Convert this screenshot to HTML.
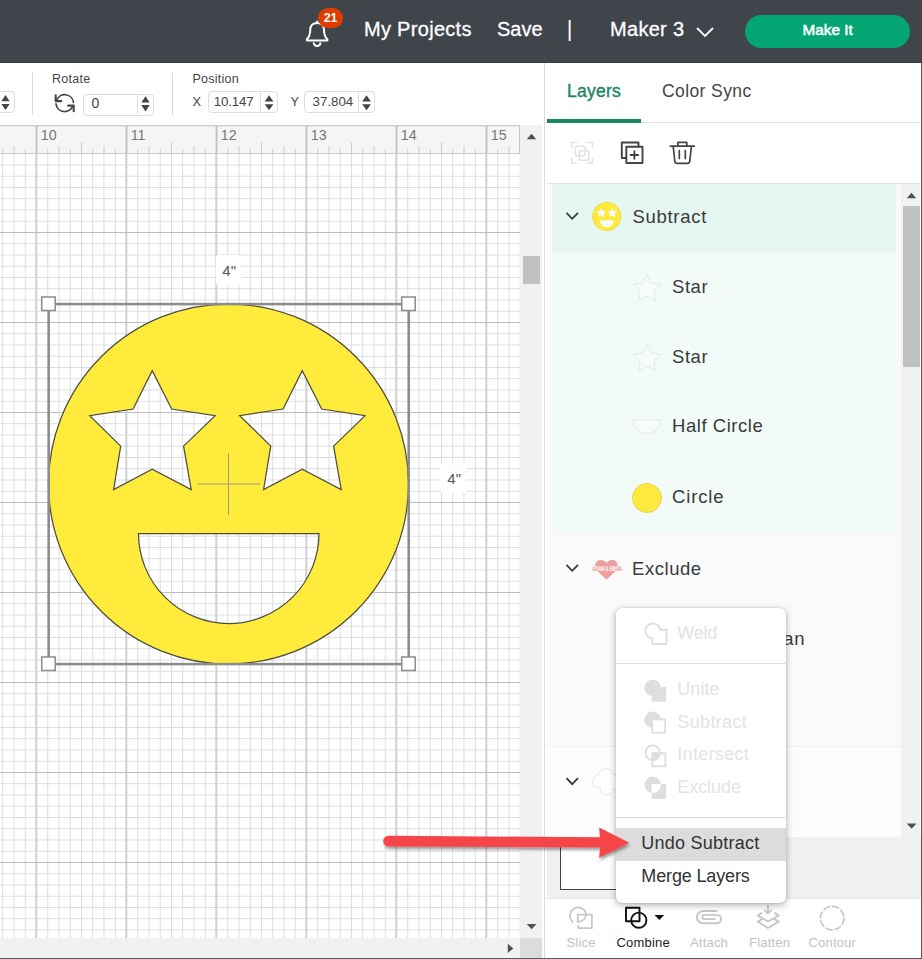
<!DOCTYPE html>
<html>
<head>
<meta charset="utf-8">
<title>Design Space - Combine</title>
<style>
*{box-sizing:border-box;margin:0;padding:0}
html,body{width:922px;height:959px;overflow:hidden;background:#fff}
body{position:relative;font-family:"Liberation Sans",sans-serif;color:#333}
.abs{position:absolute}
.t{position:absolute;white-space:nowrap;line-height:1}
/* top bar */
#topbar{left:0;top:0;width:922px;height:62.500px;background:#40444b;border-bottom:1px solid #353940}
.nav{color:#fff;font-size:20px;-webkit-text-stroke:0.300px #fff}
#makeit{left:745px;top:15px;width:165px;height:33px;border-radius:17px;background:#03a673}
/* toolbar */
.lab{font-size:12.5px;color:#444}
.inp{border:1px solid #dcdcdc;border-radius:4px;background:#fff;height:22px}
.val{font-size:13.300px;color:#444}
.sep{width:1px;background:#d8d8d8;top:73px;height:42px}
/* panel */
.lname{font-size:18.5px;color:#3a3a3a}
.mi{font-size:18px;color:#e3e3e3}
.mi2{font-size:18px;color:#333}
.bl{font-size:13px;color:#c2c2c2}
</style>
</head>
<body>

<!-- ===== TOP BAR ===== -->
<div id="topbar" class="abs"></div>
<svg class="abs" style="left:300px;top:0px" width="50" height="60" viewBox="300 0 50 60">
  <path d="M306.900 40.600 L306.900 39.300 C309.600 36.500 310.200 34 310.200 30 C310.200 25.500 313 22.900 317.100 22.900 C321.200 22.900 324 25.500 324 30 C324 34 324.600 36.500 327.400 39.300 L327.400 40.600 Z M317.100 20.800 V22.500" fill="none" stroke="#fff" stroke-width="2" stroke-linejoin="round"/>
  <path d="M313.700 42.600 A3.400 3.400 0 0 0 320.500 42.600" fill="none" stroke="#fff" stroke-width="2"/>
  <rect x="318" y="8" width="25.200" height="20.200" rx="10.100" fill="#e03c00"/>
  <text x="330.400" y="21.900" font-size="12.300" font-weight="bold" fill="#fff" text-anchor="middle" font-family="Liberation Sans, sans-serif" letter-spacing="-0.3">21</text>
</svg>
<div id="nav1" class="t nav" style="left:364px;top:19.400px;letter-spacing:0.3px">My Projects</div>
<div id="nav2" class="t nav" style="left:497px;top:19.400px;letter-spacing:0px">Save</div>
<div id="nav3" class="t nav" style="left:566.800px;top:17.500px;font-size:22px;-webkit-text-stroke:0">|</div>
<div id="nav4" class="t nav" style="left:610px;top:19.400px;letter-spacing:0.3px">Maker 3</div>
<svg class="abs" style="left:694px;top:24px" width="22" height="16" viewBox="0 0 22 16"><path d="M3 4 L11 12 L19 4" fill="none" stroke="#fff" stroke-width="1.8"/></svg>
<div id="makeit" class="abs"></div>
<div id="mk" class="t" style="left:802.500px;top:21.500px;font-size:15.300px;color:#fff;-webkit-text-stroke:0.550px #fff">Make It</div>

<!-- ===== EDIT TOOLBAR ===== -->
<div class="abs inp" style="left:-20px;top:91.300px;width:34.600px;border-radius:4px"></div>
<div class="abs sep" style="left:32px"></div>
<div class="abs sep" style="left:172px"></div>
<div id="lrot" class="t lab" style="left:52px;top:73px;letter-spacing:0.250px">Rotate</div>
<div id="lpos" class="t lab" style="left:192.500px;top:73px;letter-spacing:0.250px">Position</div>
<svg class="abs" style="left:50px;top:90px" width="30" height="26" viewBox="50 90 30 26" fill="none" stroke="#444" stroke-width="1.700" stroke-linecap="round" stroke-linejoin="round">
  <path d="M56.600 100.400 A8.700 8.700 0 0 1 73.400 102.400"/><path d="M55.700 95.400 V101.100 H61.300" stroke-width="2.100"/>
  <path d="M72.800 105.900 A8.700 8.700 0 0 1 56 103.800"/><path d="M73.700 111.300 V105.600 H68.100" stroke-width="2.100"/>
</svg>
<div class="abs inp" style="left:83.400px;top:93.500px;width:71px"></div>
<div class="abs" style="left:137px;top:94.500px;width:1px;height:19px;background:#ddd"></div>
<div id="v0" class="t val" style="left:91.500px;top:95.500px;font-size:14px">0</div>
<div id="lx" class="t lab" style="left:192.500px;top:96px;font-size:12.800px">X</div>
<div class="abs inp" style="left:207.500px;top:91.200px;width:70.500px"></div>
<div class="abs" style="left:260px;top:92.200px;width:1px;height:20px;background:#ddd"></div>
<div id="vx" class="t val" style="left:213.700px;top:95px;letter-spacing:-0.150px">10.147</div>
<div id="ly" class="t lab" style="left:290.500px;top:96px;font-size:12.800px">Y</div>
<div class="abs inp" style="left:304.300px;top:91.200px;width:70.500px"></div>
<div class="abs" style="left:358px;top:92.200px;width:1px;height:20px;background:#ddd"></div>
<div id="vy" class="t val" style="left:312.600px;top:95px">37.804</div>
<svg class="abs" style="left:0;top:88px" width="400" height="30" viewBox="0 88 400 30">
  <g fill="#444">
    <path d="M1.400 101.200 l4.100 -6.200 l4.100 6.200z M1.400 104 l4.100 6.100 l4.100 -6.100z"/>
    <path d="M141.300 102.600 l4.200 -6.300 l4.200 6.300z M141.300 105 l4.200 6.400 l4.200 -6.400z"/>
    <path d="M264.700 101.400 l4.350 -6.100 l4.350 6.100z M264.700 104.200 l4.350 6 l4.350 -6z"/>
    <path d="M362.200 101.400 l4.350 -6.100 l4.350 6.100z M362.200 104.200 l4.350 6 l4.350 -6z"/>
  </g>
</svg>

<!-- ===== CANVAS AREA ===== -->
<svg id="canvas" class="abs" style="left:0;top:125px" width="520" height="813" viewBox="0 125 520 813">
  <defs>
    <pattern id="gmin" x="2.25" y="7" width="11.25" height="11.25" patternUnits="userSpaceOnUse">
      <path d="M0.5 0 V11.25 M0 0.5 H11.25" stroke="#dcdcdc" stroke-width="1" fill="none"/>
    </pattern>
    <pattern id="gmaj" x="35.300" y="232" width="90" height="90" patternUnits="userSpaceOnUse">
      <path d="M1 0 V90" stroke="#d0d0d0" stroke-width="2" fill="none"/><path d="M0 0.500 H90" stroke="#bdbdbd" stroke-width="1.200" fill="none"/>
    </pattern>
  </defs>
  <rect x="0" y="125" width="520" height="813" fill="#fff"/>
  <rect x="0" y="153" width="520" height="785" fill="url(#gmin)"/>
  <rect x="0" y="153" width="520" height="785" fill="url(#gmaj)"/>
  <!-- ruler -->
  <rect x="0" y="125" width="520" height="28.500" fill="#f5f5f5"/>
  <rect x="0" y="124.800" width="520" height="1.600" fill="#cdcdcd"/>
  <rect x="0" y="153" width="520" height="1" fill="#d0d0d0"/>
  <rect x="519" y="125" width="1" height="29" fill="#c8c8c8"/>
  <g id="ticks" stroke="#cacaca" stroke-width="1"><line x1="2.75" y1="149" x2="2.75" y2="153.500"/><line x1="14.00" y1="146" x2="14.00" y2="153.500"/><line x1="25.25" y1="149" x2="25.25" y2="153.500"/><line x1="47.75" y1="149" x2="47.75" y2="153.500"/><line x1="59.00" y1="146" x2="59.00" y2="153.500"/><line x1="70.25" y1="149" x2="70.25" y2="153.500"/><line x1="81.50" y1="142.6" x2="81.50" y2="153.500"/><line x1="92.75" y1="149" x2="92.75" y2="153.500"/><line x1="104.00" y1="146" x2="104.00" y2="153.500"/><line x1="115.25" y1="149" x2="115.25" y2="153.500"/><line x1="137.75" y1="149" x2="137.75" y2="153.500"/><line x1="149.00" y1="146" x2="149.00" y2="153.500"/><line x1="160.25" y1="149" x2="160.25" y2="153.500"/><line x1="171.50" y1="142.6" x2="171.50" y2="153.500"/><line x1="182.75" y1="149" x2="182.75" y2="153.500"/><line x1="194.00" y1="146" x2="194.00" y2="153.500"/><line x1="205.25" y1="149" x2="205.25" y2="153.500"/><line x1="227.75" y1="149" x2="227.75" y2="153.500"/><line x1="239.00" y1="146" x2="239.00" y2="153.500"/><line x1="250.25" y1="149" x2="250.25" y2="153.500"/><line x1="261.50" y1="142.6" x2="261.50" y2="153.500"/><line x1="272.75" y1="149" x2="272.75" y2="153.500"/><line x1="284.00" y1="146" x2="284.00" y2="153.500"/><line x1="295.25" y1="149" x2="295.25" y2="153.500"/><line x1="317.75" y1="149" x2="317.75" y2="153.500"/><line x1="329.00" y1="146" x2="329.00" y2="153.500"/><line x1="340.25" y1="149" x2="340.25" y2="153.500"/><line x1="351.50" y1="142.6" x2="351.50" y2="153.500"/><line x1="362.75" y1="149" x2="362.75" y2="153.500"/><line x1="374.00" y1="146" x2="374.00" y2="153.500"/><line x1="385.25" y1="149" x2="385.25" y2="153.500"/><line x1="407.75" y1="149" x2="407.75" y2="153.500"/><line x1="419.00" y1="146" x2="419.00" y2="153.500"/><line x1="430.25" y1="149" x2="430.25" y2="153.500"/><line x1="441.50" y1="142.6" x2="441.50" y2="153.500"/><line x1="452.75" y1="149" x2="452.75" y2="153.500"/><line x1="464.00" y1="146" x2="464.00" y2="153.500"/><line x1="475.25" y1="149" x2="475.25" y2="153.500"/><line x1="497.75" y1="149" x2="497.75" y2="153.500"/><line x1="509.00" y1="146" x2="509.00" y2="153.500"/><line x1="520.25" y1="149" x2="520.25" y2="153.500"/><line x1="36.5" y1="126" x2="36.5" y2="153.500" stroke="#c2c2c2" stroke-width="1.900"/><line x1="126.5" y1="126" x2="126.5" y2="153.500" stroke="#c2c2c2" stroke-width="1.900"/><line x1="216.5" y1="126" x2="216.5" y2="153.500" stroke="#c2c2c2" stroke-width="1.900"/><line x1="306.5" y1="126" x2="306.5" y2="153.500" stroke="#c2c2c2" stroke-width="1.900"/><line x1="396.5" y1="126" x2="396.5" y2="153.500" stroke="#c2c2c2" stroke-width="1.900"/><line x1="486.5" y1="126" x2="486.5" y2="153.500" stroke="#c2c2c2" stroke-width="1.900"/></g>
  <g font-family="Liberation Sans, sans-serif" font-size="14.300" fill="#777">
    <text x="40.700" y="140.300">10</text><text x="130.700" y="140.300">11</text><text x="220.700" y="140.300">12</text>
    <text x="310.700" y="140.300">13</text><text x="400.700" y="140.300">14</text><text x="490.700" y="140.300">15</text>
  </g>
</svg>

<!-- shape -->
<svg id="shape" class="abs" style="left:0;top:240px" width="520" height="460" viewBox="0 240 520 460">
  <path id="face" fill="#ffeb3b" stroke="#4e4e42" stroke-width="1.250" fill-rule="evenodd" d="
    M48.500 484 a180 180 0 1 0 360 0 a180 180 0 1 0 -360 0 z
    M152.200 370.600 L171.700 409 L215.100 415.700 L183.600 446.100 L191.200 489.500 L152.200 469.300 L113.600 489.500 L120.700 446.100 L89.700 415.700 L133.100 409 z
    M302.200 370.600 L321.700 409 L365.100 415.700 L333.600 446.100 L341.200 489.500 L302.200 469.300 L263.600 489.500 L270.700 446.100 L239.700 415.700 L283.100 409 z
    M138.500 533.500 H319 A90.250 90 0 0 1 138.500 533.500 z"/>
  <path d="M197.500 484 H260 M228.500 453.500 V515" stroke="#9a9a8a" stroke-width="1" fill="none"/>
  <!-- selection -->
  <rect x="48.700" y="304.100" width="360.100" height="360" fill="none" stroke="#8c8c8c" stroke-width="2.500"/>
  <g fill="#fff" stroke="#8a8a8a" stroke-width="1.500">
    <rect x="41.700" y="297" width="13.500" height="13.500"/><rect x="401.700" y="297" width="13.500" height="13.500"/>
    <rect x="41.700" y="657" width="13.500" height="13.500"/><rect x="401.700" y="657" width="13.500" height="13.500"/>
  </g>
  <rect x="215.800" y="255" width="25.500" height="30" rx="2" fill="#fff"/>
  <rect x="440.700" y="463" width="25.500" height="30" rx="2" fill="#fff"/>
  <g font-family="Liberation Sans, sans-serif" font-size="15" fill="#555">
    <text x="229.200" y="276" text-anchor="middle">4"</text><text x="454.200" y="483.800" text-anchor="middle">4"</text>
  </g>
</svg>

<!-- scrollbars -->
<div class="abs" style="left:520px;top:125px;width:22px;height:813px;background:#f1f1f1"></div>
<div class="abs" style="left:523px;top:256px;width:17px;height:28px;background:#c1c1c1"></div>
<div class="abs" style="left:0;top:938px;width:520px;height:20px;background:#f1f1f1"></div>
<div class="abs" style="left:520px;top:938px;width:22px;height:20px;background:#dcdcdc"></div>
<svg class="abs" style="left:500px;top:125px" width="44" height="834" viewBox="500 125 44 834" fill="#505050">
  <path d="M526.800 139.200 L531.500 133.700 L536.200 139.200 z"/>
  <path d="M526.700 924 L536.500 924 L531.600 929.200 z"/>
  <path d="M507.800 943.800 L513.400 948.400 L507.800 953 z"/>
</svg>

<!-- PANEL -->
<div id="panel" class="abs" style="left:544px;top:63px;width:378px;height:896px;border-left:1px solid #dcdcdc;background:#fff"></div>

<!-- tabs -->
<div id="tab1" class="t" style="left:567px;top:83px;font-size:17.5px;letter-spacing:0.250px;color:#1a8764;-webkit-text-stroke:0.4px #1a8764">Layers</div>
<div id="tab2" class="t" style="left:662px;top:83px;font-size:17.5px;color:#444;letter-spacing:0.4px">Color Sync</div>
<div class="abs" style="left:545px;top:121.500px;width:375px;height:1px;background:#e2e2e2"></div>
<div class="abs" style="left:547px;top:119px;width:94px;height:3.500px;background:#1a8764"></div>
<!-- action icons -->
<svg class="abs" style="left:560px;top:132px" width="150" height="42" viewBox="560 132 150 42" fill="none" stroke-linejoin="round">
  <g stroke="#e3e3e3" stroke-width="1.600">
    <path d="M571.700 148 V142.500 H577 M587 142.500 H592.500 V148 M592.500 157.500 V163 H587 M577 163 H571.700 V157.500"/>
    <rect x="575.300" y="146.200" width="9.600" height="9.600" rx="2"/><rect x="579.300" y="150.600" width="9.600" height="9.600" rx="2"/>
  </g>
  <g stroke="#444" stroke-width="1.900">
    <path d="M626 158 H621.800 V142.500 H638.500 V146.500"/>
    <rect x="626.300" y="146.800" width="16.200" height="16.200"/>
    <path d="M634.400 150.500 V159.500 M629.900 155 H638.900"/>
  </g>
  <g stroke="#444" stroke-width="1.700" stroke-linecap="round">
    <path d="M670.300 146.200 H694.300 M677.800 146 V142.300 H686.800 V146"/>
    <path d="M673.200 146.500 L674.800 161 Q675 163.400 677.400 163.400 H687.200 Q689.600 163.400 689.800 161 L691.400 146.500"/>
    <path d="M679.300 150.500 V158.500 M685.300 150.500 V158.500"/>
  </g>
</svg>
<div class="abs" style="left:547px;top:183px;width:373px;height:1px;background:#e4e4e4"></div>
<!-- layer list -->
<div class="abs" style="left:547px;top:184px;width:354px;height:653px;background:#fafafa"></div>
<div class="abs" style="left:547px;top:746px;width:354px;height:91px;background:#fcfcfc;border-top:1px solid #f1f1f1"></div>
<div class="abs" style="left:552px;top:184px;width:343.500px;height:348.500px;background:#f2fbf8"></div>
<div class="abs" style="left:552px;top:184px;width:343.500px;height:68.500px;background:#e6f7f1"></div>
<!-- list scrollbar -->
<div class="abs" style="left:901px;top:184px;width:19px;height:653px;background:#f1f1f1"></div>
<div class="abs" style="left:903px;top:206px;width:17px;height:160.500px;background:#c1c1c1"></div>
<svg class="abs" style="left:901px;top:184px" width="20" height="653" viewBox="901 184 20 653" fill="#505050">
  <path d="M906.800 198.300 L911.500 192.800 L916.200 198.300 z"/>
  <path d="M906.700 823.500 L916.500 823.500 L911.600 828.700 z"/>
</svg>
<!-- layer rows -->
<svg class="abs" style="left:545px;top:184px" width="356" height="653" viewBox="545 184 356 653" fill="none">
  <g stroke="#3a3a3a" stroke-width="1.800"><path d="M566.500 212.800 L572.200 218.800 L578 212.800"/><path d="M566.500 564.800 L572.200 570.800 L578 564.800"/><path d="M566.500 778.200 L572.200 784.200 L578 778.200"/></g>
  <!-- smiley thumb -->
  <circle cx="606.800" cy="216.500" r="14.200" fill="#fdea3c" stroke="#e9d84a" stroke-width="0.800"/>
  <g fill="#f4fbf4">
    <path d="M601.300 207.800 l1.500 3.100 l3.400 0.500 l-2.500 2.400 l0.600 3.400 l-3 -1.600 l-3 1.600 l0.600 -3.400 l-2.500 -2.400 l3.400 -0.500z"/>
    <path d="M612.300 207.800 l1.500 3.100 l3.400 0.500 l-2.500 2.400 l0.600 3.400 l-3 -1.600 l-3 1.600 l0.600 -3.400 l-2.500 -2.400 l3.400 -0.500z"/>
    <path d="M599.800 220.300 H613.800 A7 7 0 0 1 599.800 220.300 z"/>
  </g>
  <!-- star thumbs -->
  <g stroke="#e3e8e6" stroke-width="1" fill="#f6fcfa">
    <path d="M647 274.300 l4.200 8.800 l9.500 1.400 l-6.900 6.700 l1.600 9.500 l-8.400 -4.500 l-8.400 4.500 l1.600 -9.500 l-6.900 -6.700 l9.500 -1.400z"/>
    <path d="M647 344.300 l4.200 8.800 l9.500 1.400 l-6.900 6.700 l1.600 9.500 l-8.400 -4.500 l-8.400 4.500 l1.600 -9.500 l-6.900 -6.700 l9.500 -1.400z"/>
    <path d="M633 419.800 H661 A14 14 0 0 1 633 419.800 z"/>
  </g>
  <circle cx="647" cy="498" r="14.500" fill="#fdea3c" stroke="#e6d648" stroke-width="1"/>
  <!-- heart thumb -->
  <defs><clipPath id="hc"><path d="M606.500 579.600 C 601 574.500 595.300 570.500 595.300 565.600 C 595.300 559.300 603.300 558 606.500 563 C 609.700 558 617.700 559.300 617.700 565.600 C 617.700 570.500 612 574.500 606.500 579.600 z"/></clipPath></defs>
  <text x="592.300" y="571.300" font-family="Liberation Sans, sans-serif" font-size="7.500" font-weight="bold" fill="#ee9c9c" textLength="29.700" lengthAdjust="spacingAndGlyphs">ADAM &amp; EMMA</text>
  <path d="M606.500 579.600 C 601 574.500 595.300 570.500 595.300 565.600 C 595.300 559.300 603.300 558 606.500 563 C 609.700 558 617.700 559.300 617.700 565.600 C 617.700 570.500 612 574.500 606.500 579.600 z" fill="#ef9d9d"/>
  <text x="592.300" y="571.300" font-family="Liberation Sans, sans-serif" font-size="7.500" font-weight="bold" fill="#fff" textLength="29.700" lengthAdjust="spacingAndGlyphs" clip-path="url(#hc)">ADAM &amp; EMMA</text>
  <!-- cloud thumb -->
  <g fill="#fff" stroke="#e9e9e9" stroke-width="2"><circle cx="598.500" cy="781.500" r="5.800"/><circle cx="606" cy="776.200" r="7"/><circle cx="607" cy="788.300" r="6"/><circle cx="614" cy="782" r="7"/></g>
  <g fill="#fff"><circle cx="598.500" cy="781.500" r="5.800"/><circle cx="606" cy="776.200" r="7"/><circle cx="607" cy="788.300" r="6"/><circle cx="614" cy="782" r="7"/></g>
</svg>
<div id="ln1" class="t lname" style="left:632.500px;top:207.7px;letter-spacing:0.700px">Subtract</div>
<div id="ln2" class="t lname" style="left:672px;top:277.7px;letter-spacing:0.55px">Star</div>
<div id="ln3" class="t lname" style="left:672px;top:347.7px;letter-spacing:0.55px">Star</div>
<div id="ln4" class="t lname" style="left:672px;top:416.8px;letter-spacing:0.55px">Half Circle</div>
<div id="ln5" class="t lname" style="left:672px;top:487.5px;letter-spacing:0.85px">Circle</div>
<div id="ln6" class="t lname" style="left:632px;top:559.7px;letter-spacing:0.55px">Exclude</div>
<div id="ln7" class="t lname" style="right:117px;top:629.7px;letter-spacing:0.55px">Heart - Human</div>

<!-- gray area + white box -->
<div class="abs" style="left:547px;top:837px;width:374px;height:61px;background:#f0f0f0"></div>
<div class="abs" style="left:560px;top:837px;width:80px;height:53px;background:#fff;border:1.500px solid #444;border-top:none"></div>
<div class="abs" style="left:545px;top:898px;width:375px;height:59px;background:#fff;border-top:1px solid #e8e8e8"></div>

<!-- bottom tools -->
<svg class="abs" style="left:560px;top:900px" width="310" height="36" viewBox="560 900 310 36" fill="none" stroke-linecap="round" stroke-linejoin="round">
  <g stroke="#c6c6c6" stroke-width="1.700">
    <path d="M572.600 921.800 A8.250 8.250 0 1 1 586.400 914.700"/>
    <path d="M577.700 914.700 H591.900 V928.100 H578.300 V925.600"/>
    <path d="M577.700 914.700 V921.900 Q585.200 921.300 586.300 914.700"/>
    <!-- attach -->
    <path d="M716.600 911 H703.100 A6.150 6.150 0 0 0 703.100 923.300 H716.800 A4.200 4.200 0 0 0 716.800 914.900 H704.400 A2.100 2.100 0 0 0 704.400 919.100 H714.800" stroke-width="1.900"/>
    <!-- flatten -->
    <path d="M767.900 905.700 V913 M764.400 910.100 L767.900 913.400 L771.500 910.100"/>
    <path d="M761.400 913.100 L757.800 915.500 L767.900 921.500 L778.700 915.500 L775.100 913.100" stroke-width="1.900"/>
    <path d="M762.300 919 L757.800 921.600 L767.900 928 L778.700 921.600 L774.200 919" stroke-width="1.900"/>
    <!-- contour -->
    <circle cx="832.200" cy="918.100" r="11.800" stroke-dasharray="6.200 3.070"/>
  </g>
  <g stroke="#111" stroke-width="1.900">
    <rect x="626" y="907.800" width="13.500" height="13.500"/>
    <circle cx="638.800" cy="920.200" r="7.600"/>
  </g>
  <path d="M654.500 915 H664.200 L659.350 920 z" fill="#111" stroke="none"/>
</svg>
<div id="b1" class="t bl" style="left:566.500px;top:936px;letter-spacing:0.2px">Slice</div>
<div id="b2" class="t bl" style="left:616.500px;top:936px;color:#222;letter-spacing:0.2px">Combine</div>
<div id="b3" class="t bl" style="left:690px;top:936px;letter-spacing:0.2px">Attach</div>
<div id="b4" class="t bl" style="left:749px;top:936px;letter-spacing:0.2px">Flatten</div>
<div id="b5" class="t bl" style="left:808.500px;top:936px;letter-spacing:0.2px">Contour</div>

<!-- popup -->
<div id="popup" class="abs" style="left:616px;top:608px;width:169.500px;height:294.600px;background:#fff;border-radius:6px;box-shadow:0 2px 7px rgba(0,0,0,0.32),0 0 1px rgba(0,0,0,0.25)"></div>
<div class="abs" style="left:616px;top:663px;width:169.500px;height:1px;background:#dcdcdc"></div>
<div class="abs" style="left:616px;top:816.500px;width:169.500px;height:1px;background:#dcdcdc"></div>
<div class="abs" style="left:616px;top:828px;width:169.500px;height:32.500px;background:#dcdcdc"></div>
<svg class="abs" style="left:640px;top:618px" width="32" height="186" viewBox="640 618 32 186">
  <g fill="none" stroke="#dedede" stroke-width="1.600" stroke-linejoin="round">
    <path d="M652.400 638.500 A7.500 7.500 0 1 1 660.300 629.800 H666.500 V644 H652.400 z" stroke-width="1.900"/>
    <circle cx="652.700" cy="752.700" r="7.300" stroke-width="1.900"/><rect x="652.400" y="753.300" width="13" height="13" stroke-width="1.900"/>
  </g>
  <g fill="#dedede">
    <circle cx="652.700" cy="688" r="8.200"/><rect x="651.500" y="687" width="14.600" height="14.600"/>
    <path d="M651.500 727.900 A8.200 8.200 0 1 1 660.700 718.600 H666 V733.600 H651.500 z M653.200 720.300 V731.900 H664.300 V720.300 z" fill-rule="evenodd"/>
    <path d="M652.400 753.300 H659.800 A7.400 7.400 0 0 1 652.400 759.900 z"/>
    <path d="M652.700 776.600 A8.200 8.200 0 1 0 652.700 793 A8.200 8.200 0 1 0 652.700 776.600 z M651.500 784 H660.900 A8.200 8.200 0 0 1 651.500 793 z" fill-rule="evenodd"/>
    <path d="M660.900 784 H666.100 V798.900 H651.500 V793 A8.200 8.200 0 0 0 660.900 784 z"/>
  </g>
</svg>
<div id="m1" class="t mi" style="left:677.300px;top:624px;letter-spacing:-0.20px">Weld</div>
<div id="m2" class="t mi" style="left:677.300px;top:680px;letter-spacing:0.05px">Unite</div>
<div id="m3" class="t mi" style="left:677.300px;top:713px;letter-spacing:0.36px">Subtract</div>
<div id="m4" class="t mi" style="left:677.300px;top:745px;letter-spacing:0.29px">Intersect</div>
<div id="m5" class="t mi" style="left:677.300px;top:778px;letter-spacing:-0.07px">Exclude</div>
<div id="m6" class="t mi2" style="left:641.300px;top:833.500px;letter-spacing:0.240px">Undo Subtract</div>
<div id="m7" class="t mi2" style="left:641.300px;top:866.600px;letter-spacing:-0.140px">Merge Layers</div>

<!-- red arrow -->
<svg class="abs" style="left:370px;top:815px" width="270" height="60" viewBox="370 815 270 60">
  <defs><filter id="sh" x="-5%" y="-30%" width="110%" height="180%"><feDropShadow dx="1" dy="2.500" stdDeviation="1.800" flood-color="#000" flood-opacity="0.400"/></filter></defs>
  <g filter="url(#sh)" fill="#f64449">
    <path d="M388.500 835.800 L600 837.200 L599.200 827.600 L629.300 842.700 L599.200 857.800 L600 847.500 L388.500 846.400 A5.300 5.300 0 0 1 388.500 835.800 z"/>
  </g>
</svg>

<!-- frame -->
<div class="abs" style="left:920.700px;top:63px;width:1.300px;height:896px;background:#5a5a5a"></div>
<div class="abs" style="left:0;top:957.700px;width:922px;height:1.300px;background:#5a5a5a"></div>

</body>
</html>
